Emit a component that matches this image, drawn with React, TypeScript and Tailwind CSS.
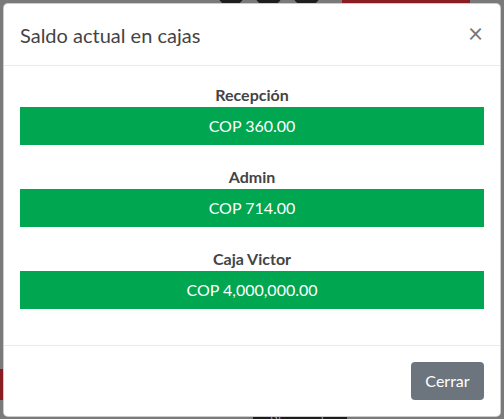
import React from 'react'

const cajas = [
  { name: 'Recepción', saldo: 'COP 360.00' },
  { name: 'Admin', saldo: 'COP 714.00' },
  { name: 'Caja Victor', saldo: 'COP 4,000,000.00' },
]

const App = () => {
  return (
    <div className='relative w-[504px] h-[419px] overflow-hidden bg-[#7a7a7a] font-["Lato","Liberation_Sans",sans-serif]'>
      {/* dimmed page behind the modal */}
      <div className='absolute left-[217px] top-[-22px] w-[28px] h-[28px] rounded-full bg-[#1e1e1e]' />
      <div className='absolute left-[254px] top-[-22px] w-[29px] h-[28px] rounded-full bg-[#1e1e1e]' />
      <div className='absolute left-[292px] top-[-22px] w-[29px] h-[28px] rounded-full bg-[#1e1e1e]' />
      <div className='absolute left-[342px] top-0 w-[128px] h-[4px] bg-[#8a1d22]' />
      <div className='absolute left-0 top-[369px] w-[4px] h-[31px] bg-[#8a1d22]' />
      <div className='absolute left-[253px] top-[414px] w-[94px] h-[10px] bg-[#1c1c1c] text-[#9a9a9a] text-[13px] leading-[13px] text-center pt-[1px]'>Bloqueada</div>

      <div className='relative pt-[3px] pl-[3px] pr-[3px]'>
        <div className='w-[498px] bg-white rounded-[5px] border border-black/20 flex flex-col'>
          <div className='flex items-start justify-between px-4 pt-4 pb-4 border-b border-[#e9ecef] h-[62px]'>
            <h5 className='text-[20px] leading-[30px] text-[#444] font-normal'>Saldo actual en cajas</h5>
            <button className='text-[26px] leading-[24px] font-normal text-[#7a7a7a] mt-[1px] mr-[1px]'>×</button>
          </div>

          <div className='px-4 pt-4 pb-4 flex flex-col gap-[19px]'>
            {cajas.map((c) => (
              <div key={c.name} className='flex flex-col'>
                <div className='text-center text-[16px] leading-[25px] font-bold text-[#444]'>{c.name}</div>
                <div className='h-[38px] bg-[#00a650] text-white text-[16px] flex items-center justify-center'>{c.saldo}</div>
              </div>
            ))}
            <div className='h-px' />
          </div>

          <div className='border-t border-[#e9ecef] p-4 flex justify-end'>
            <button className='h-[38px] w-[73px] bg-[#6c757d] text-white text-[16px] rounded-[4px]'>Cerrar</button>
          </div>
        </div>
      </div>
    </div>
  )
}

export default App
